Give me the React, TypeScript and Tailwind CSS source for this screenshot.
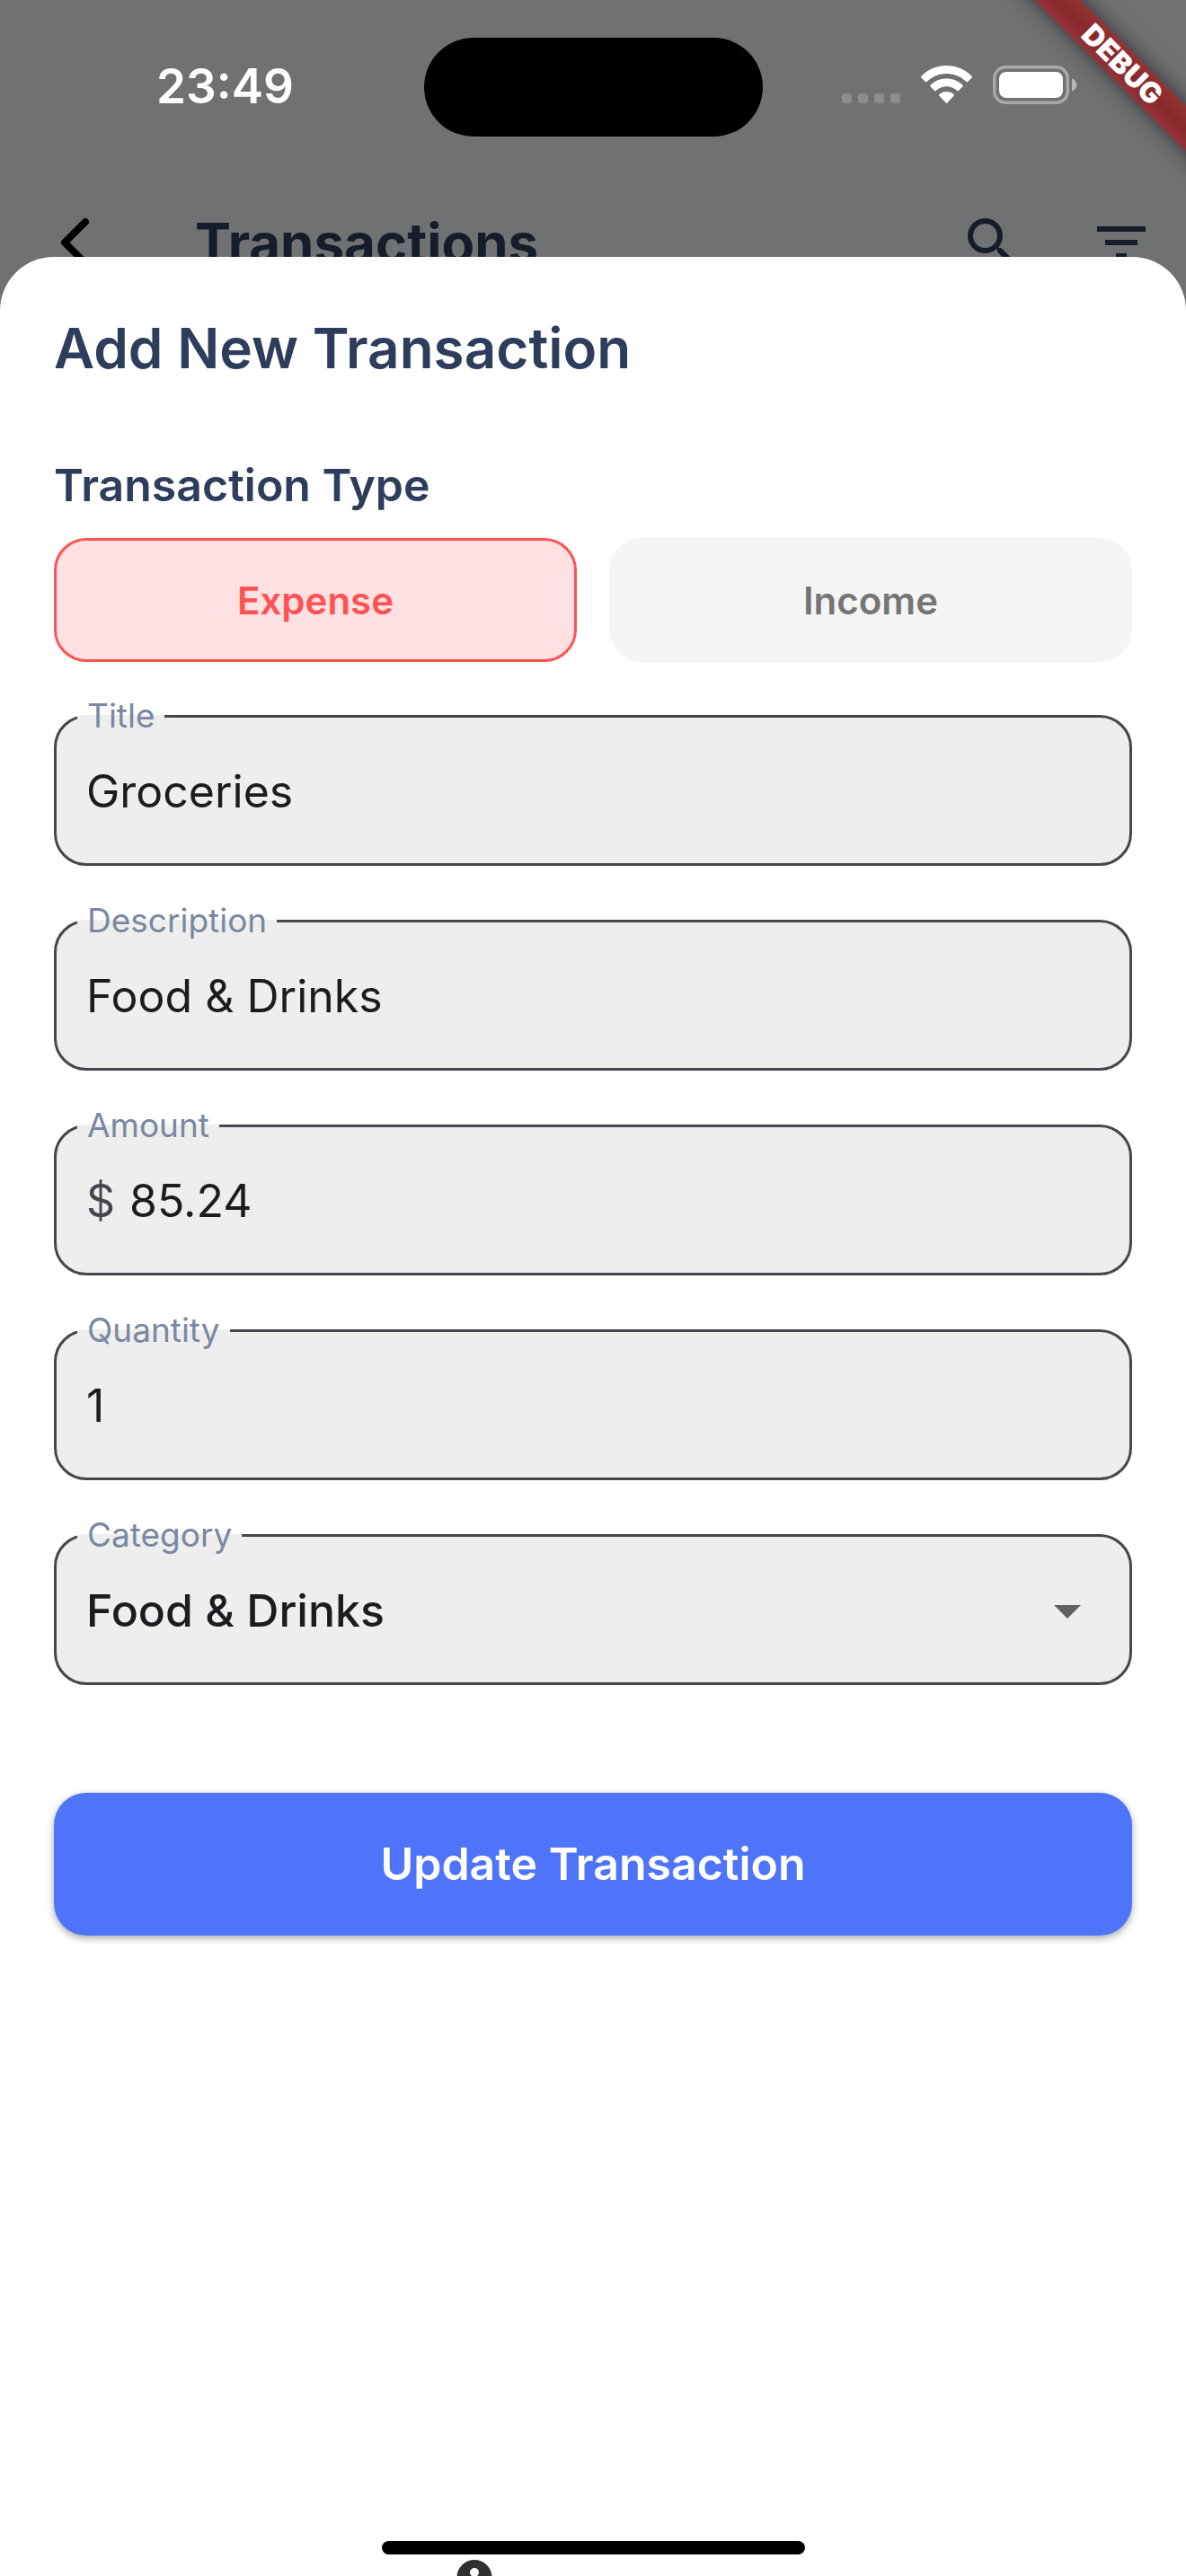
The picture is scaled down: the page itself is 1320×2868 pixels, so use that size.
import React, { useState } from 'react';

function StatusBar() {
  return (
    <div className="grid h-[190px] grid-cols-[minmax(0,1fr)_377px_minmax(0,1fr)] items-start">
      <div className="pt-[64px] pl-[174px] text-[53px] leading-[64px] font-semibold text-white">23:49</div>
      <div className="mt-[42px] h-[110px] rounded-full bg-black" />
      <div className="flex justify-end pt-[73px] pr-[121px]">
        <svg width="262" height="44" viewBox="0 0 262 44" fill="none" aria-label="Signal, Wi-Fi and battery">
          <g fill="#8d8d8f">
            <rect x="0" y="31" width="11" height="11" rx="3" />
            <rect x="18" y="31" width="11" height="11" rx="3" />
            <rect x="36" y="31" width="11" height="11" rx="3" />
            <rect x="54" y="31" width="11" height="11" rx="3" />
          </g>
          <g fill="#fff">
            <path d="M88.300 13.500a1 1 0 0 1 0-1.500C103-4 130-4 144.700 12a1 1 0 0 1 0 1.500L140 18a1 1 0 0 1-1.500 0C126 6 107 6 94.500 18a1 1 0 0 1-1.500 0Z" />
            <path d="M98.400 23.300a1 1 0 0 1 0-1.400C108 12 125 12 134.600 21.900a1 1 0 0 1 0 1.400L129.800 28a1 1 0 0 1-1.500 0C122 21.500 111 21.500 104.700 28a1 1 0 0 1-1.500 0Z" />
            <path d="M108.300 33.500a1 1 0 0 1 0-1.500C113 28 120 28 124.700 32a1 1 0 0 1 0 1.500L117.300 41.500a1 1 0 0 1-1.600 0Z" />
          </g>
          <rect x="169.750" y="1.750" width="81.500" height="39.500" rx="12.500" stroke="#a9a9ab" strokeWidth="3.500" />
          <rect x="175" y="7" width="71" height="29" rx="8" fill="#fff" />
          <path d="M256 14.500c7 2 7 12 0 14Z" fill="#b7b7b9" />
        </svg>
      </div>
    </div>
  );
}

function AppBar() {
  return (
    <div className="flex items-start pt-11 pr-9 pl-[60px] text-[#151d2b]">
      <button type="button" aria-label="Back" className="h-[72px] w-[48px] text-black">
        <svg width="48" height="72" viewBox="0 0 48 72" fill="none" stroke="currentColor" strokeWidth="8" strokeLinecap="round" strokeLinejoin="round">
          <path d="M35 13 12 36l23 23" />
        </svg>
      </button>
      <h1 className="ml-[109px] flex-1 text-[60px] leading-[72px] font-bold">Transactions</h1>
      <button type="button" aria-label="Search" className="h-[72px] w-[72px]">
        <svg width="72" height="72" viewBox="0 0 24 24" fill="currentColor">
          <path d="M15.500 14h-.79l-.28-.27C15.410 12.590 16 11.110 16 9.500 16 5.910 13.090 3 9.500 3S3 5.910 3 9.500 5.910 16 9.500 16c1.610 0 3.090-.59 4.230-1.570l.27.28v.79l5 4.990L20.490 19l-4.990-5zm-6 0C7.010 14 5 11.990 5 9.500S7.010 5 9.500 5 14 7.010 14 9.500 11.990 14 9.500 14z" />
        </svg>
      </button>
      <button type="button" aria-label="Filter" className="ml-[72px] h-[72px] w-[72px]">
        <svg width="72" height="72" viewBox="0 0 24 24" fill="currentColor">
          <path d="M10 18h4v-2h-4v2zM3 6v2h18V6H3zm3 7h12v-2H6v2z" />
        </svg>
      </button>
    </div>
  );
}

function DebugBanner() {
  return (
    <div className="pointer-events-none absolute top-0 right-0 h-[220px] w-[220px] overflow-hidden">
      <div className="absolute top-[54px] left-0 flex h-[36px] w-[298px] rotate-45 items-center justify-center bg-linear-to-b from-[#943336] via-[#88282a] to-[#943336] text-[32px] leading-[36px] font-black text-white shadow-[0_0_24px_rgba(0,0,0,0.6)]">
        DEBUG
      </div>
    </div>
  );
}

function Field({ id, label, children }: { id: string; label: string; children: React.ReactNode }) {
  return (
    <fieldset className="min-w-0 rounded-[36px] border-[3px] border-[#49454f] bg-[#eeeeee] pr-[33px] pb-4 pl-[23px]">
      <legend className="px-[11px] text-[37px] leading-[40px] text-[#7b88a1]">
        <label htmlFor={id}>{label}</label>
      </legend>
      <div className="flex h-[128px] items-center pl-[10px] text-[50px] text-[#1d1b20]">{children}</div>
    </fieldset>
  );
}

const inputClass = 'h-full w-full min-w-0 flex-1 bg-transparent outline-none';

export default function App() {
  const [type, setType] = useState<'expense' | 'income'>('expense');
  const base = 'h-[138px] rounded-[36px] text-[42px] font-semibold';
  const typeClass = (on: boolean) =>
    on ? `${base} border-[3px] border-[#ff5252] bg-[#ffe1e3] text-[#ff5252]` : `${base} bg-[#f5f5f5] text-[#757575]`;

  return (
    <div className="relative flex min-h-screen flex-col overflow-hidden bg-[#707173] font-['Inter',sans-serif]">
      <header className="h-[286px]">
        <StatusBar />
        <AppBar />
      </header>
      <DebugBanner />

      <main className="relative flex flex-1 flex-col rounded-t-[60px] bg-white">
        <form className="flex flex-col px-[60px] pt-[66px]" onSubmit={(e) => e.preventDefault()}>
          <h2 className="text-[62px] leading-[72px] font-semibold text-[#2e3d5c]">Add New Transaction</h2>
          <h3 id="type-label" className="mt-[86px] text-[50px] leading-[60px] font-semibold text-[#2e3d5c]">
            Transaction Type
          </h3>
          <div role="group" aria-labelledby="type-label" className="mt-[29px] grid grid-cols-2 gap-9">
            <button type="button" aria-pressed={type === 'expense'} onClick={() => setType('expense')} className={typeClass(type === 'expense')}>
              Expense
            </button>
            <button type="button" aria-pressed={type === 'income'} onClick={() => setType('income')} className={typeClass(type === 'income')}>
              Income
            </button>
          </div>

          <div className="mt-10 flex flex-col gap-[41px]">
            <Field id="title" label="Title">
              <input id="title" type="text" defaultValue="Groceries" className={inputClass} />
            </Field>
            <Field id="description" label="Description">
              <input id="description" type="text" defaultValue="Food & Drinks" className={inputClass} />
            </Field>
            <Field id="amount" label="Amount">
              <span className="pr-4 text-[#49454f]">$</span>
              <input id="amount" type="text" inputMode="decimal" defaultValue="85.24" className={inputClass} />
            </Field>
            <Field id="quantity" label="Quantity">
              <input id="quantity" type="text" inputMode="numeric" defaultValue="1" className={inputClass} />
            </Field>
            <Field id="category" label="Category">
              <select id="category" defaultValue="Food & Drinks" className="h-full w-full flex-1 appearance-none bg-transparent font-medium outline-none">
                <option>Food &amp; Drinks</option>
              </select>
              <svg width="72" height="72" viewBox="0 0 24 24" fill="#616161" className="pointer-events-none -ml-[72px]" aria-hidden="true">
                <path d="M7 10l5 5 5-5z" />
              </svg>
            </Field>
          </div>

          <button
            type="submit"
            className="mt-[120px] h-[159px] rounded-[36px] bg-[#4e74f9] text-[50px] font-semibold text-white shadow-[0_3px_8px_rgba(0,0,0,0.35)]"
          >
            Update Transaction
          </button>
        </form>

        <footer className="mt-auto flex flex-col">
          <div className="h-[15px] w-[471px] self-center rounded-full bg-black" />
          <div className="mt-[6px] h-[18px] overflow-hidden pl-[508px]">
            <svg width="40" height="40" viewBox="0 0 40 40" aria-hidden="true">
              <path fillRule="evenodd" fill="#303030" d="M20 0a19.500 19.500 0 1 0 0 39 19.500 19.500 0 0 0 0-39Zm0 9a5 5 0 1 1 0 10 5 5 0 0 1 0-10Z" />
            </svg>
          </div>
        </footer>
      </main>
    </div>
  );
}
